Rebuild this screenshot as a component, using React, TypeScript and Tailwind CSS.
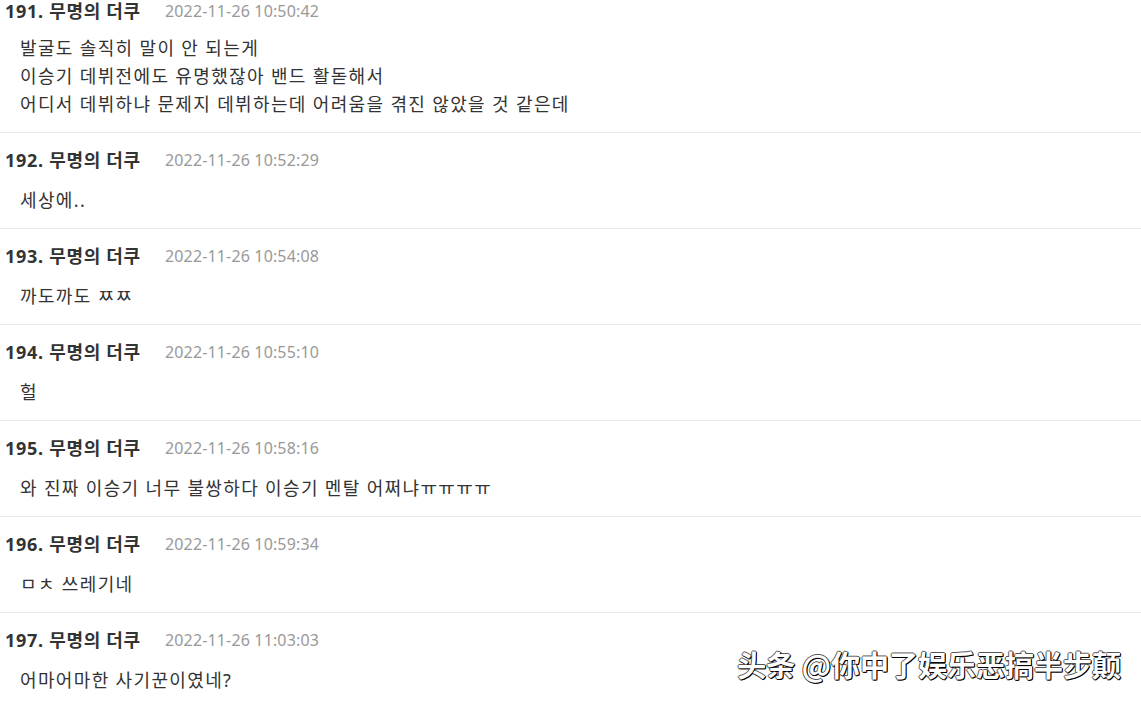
import React from "react";

interface IComment {
  no: number;
  date: string;
  lines: string[];
}

const comments: IComment[] = [
  {
    no: 191,
    date: "2022-11-26 10:50:42",
    lines: [
      "발굴도 솔직히 말이 안 되는게",
      "이승기 데뷔전에도 유명했잖아 밴드 활돋해서",
      "어디서 데뷔하냐 문제지 데뷔하는데 어려움을 겪진 않았을 것 같은데",
    ],
  },
  { no: 192, date: "2022-11-26 10:52:29", lines: ["세상에.."] },
  { no: 193, date: "2022-11-26 10:54:08", lines: ["까도까도 ㅉㅉ"] },
  { no: 194, date: "2022-11-26 10:55:10", lines: ["헐"] },
  {
    no: 195,
    date: "2022-11-26 10:58:16",
    lines: ["와 진짜 이승기 너무 불쌍하다 이승기 멘탈 어쩌냐ㅠㅠㅠㅠ"],
  },
  { no: 196, date: "2022-11-26 10:59:34", lines: ["ㅁㅊ 쓰레기네"] },
  { no: 197, date: "2022-11-26 11:03:03", lines: ["어마어마한 사기꾼이였네?"] },
];

const font = { fontFamily: '"Noto Sans", "Noto Sans CJK KR", sans-serif' };

const CommentRow: React.FC<{ c: IComment; first?: boolean }> = ({ c, first }) => {
  return (
    <div
      className={
        first
          ? "-mt-[16px] pt-[15px] pb-[14px]"
          : "border-t border-[#ebebeb] pt-[15px] pb-[14px]"
      }
    >
      <div className="flex items-center h-6 pl-[5px]">
        <span className="font-bold text-[18px] tracking-[0.7px] text-[#333] w-[160px]">
          {c.no}. 무명의 더쿠
        </span>
        <span className="text-[16px] tracking-[0.15px] text-[#999]">{c.date}</span>
      </div>
      <div className={first ? "mt-[11px] pl-[20px]" : "mt-[14px] pl-[20px]"}>
        {c.lines.map((l, i) => (
          <p key={i} className="text-[18px] tracking-[1.35px] leading-[28px] text-[#333]">
            {l}
          </p>
        ))}
      </div>
    </div>
  );
};

export default function App() {
  return (
    <div className="relative w-[1141px] h-[702px] overflow-hidden bg-white" style={font}>
      {comments.map((c, i) => (
        <CommentRow key={c.no} c={c} first={i === 0} />
      ))}
      <div
        className="absolute right-[20px] bottom-[16px] text-[29px] text-white font-bold"
        style={{
          fontFamily: '"Noto Sans CJK SC", sans-serif',
          textShadow:
            "1px 1px 0 #000, -1px 0 0 #555, 0 -1px 0 #555, 1px 0 0 #000, 0 1px 0 #000",
        }}
      >
        头条 @你中了娱乐恶搞半步颠
      </div>
    </div>
  );
}
